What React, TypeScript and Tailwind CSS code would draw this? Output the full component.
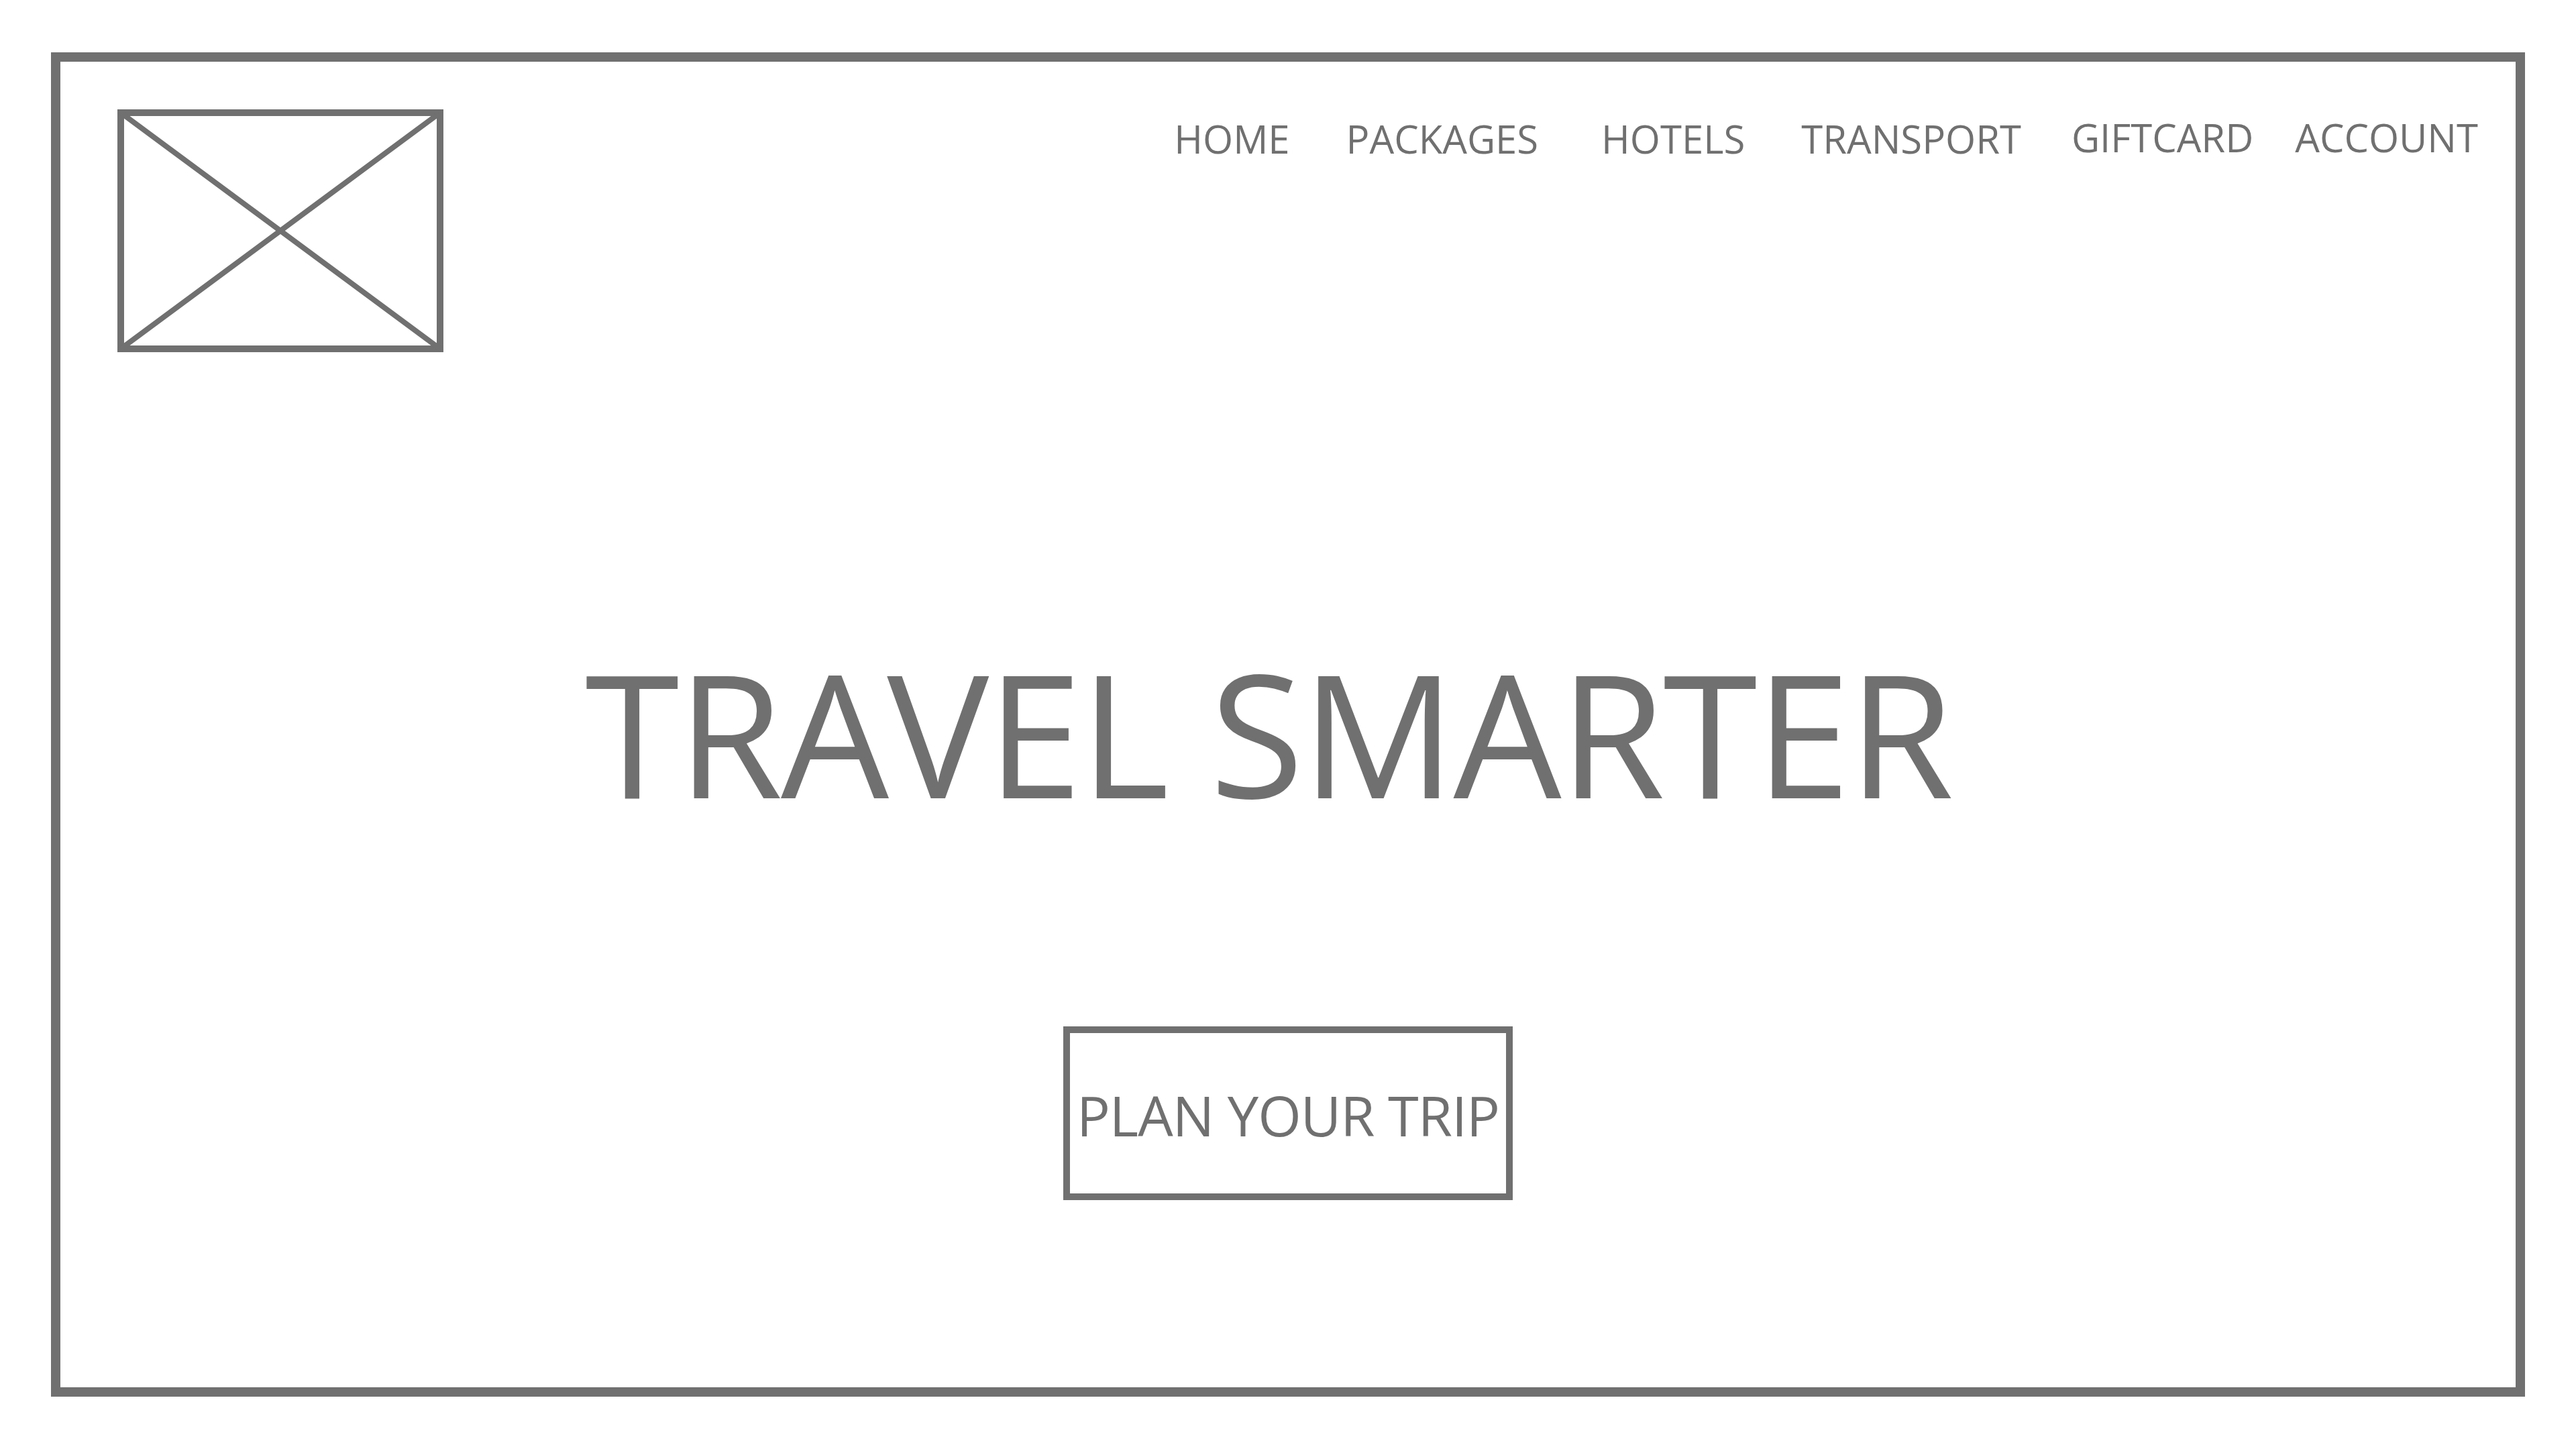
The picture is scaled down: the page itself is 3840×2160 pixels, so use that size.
import React from "react";

const navItems = [
  { label: "HOME", className: "" },
  { label: "PACKAGES", className: "ml-[84px]" },
  { label: "HOTELS", className: "ml-[94px]" },
  { label: "TRANSPORT", className: "ml-[84px]" },
  { label: "GIFTCARD", className: "ml-[75px] -mt-[2px]" },
  { label: "ACCOUNT", className: "ml-[62px] -mt-[2px]" },
];

const LogoPlaceholder = () => (
  <svg width="486" height="362" viewBox="0 0 486 362" className="block shrink-0">
    <rect x="5" y="5" width="476" height="352" fill="none" stroke="#707070" strokeWidth="10" />
    <line x1="5" y1="5" x2="481" y2="357" stroke="#707070" strokeWidth="8" strokeLinecap="square" />
    <line x1="481" y1="5" x2="5" y2="357" stroke="#707070" strokeWidth="8" strokeLinecap="square" />
  </svg>
);

export default function App() {
  return (
    <div className="min-h-screen w-full bg-white pl-[76px] pt-[78px] font-['Open_Sans',sans-serif] text-[#707070]">
      <div className="flex h-[2004px] w-[3688px] flex-col border-[14px] border-[#707070]">
        {/* header */}
        <div className="flex items-start justify-between pl-[85px] pr-[56px] pt-[71px]">
          <LogoPlaceholder />
          <nav className="mt-[15px] flex items-start">
            {navItems.map((item) => (
              <a key={item.label} href="#" className={`text-[58px] leading-none ${item.className}`}>
                {item.label}
              </a>
            ))}
          </nav>
        </div>

        {/* hero */}
        <div className="mt-[439px] flex justify-center pr-[58px]">
          <h1 className="text-[255px] font-normal leading-none tracking-[-3px]">TRAVEL SMARTER</h1>
        </div>

        <div className="mt-[311px] flex justify-center">
          <button className="flex h-[259px] w-[670px] items-center justify-center border-[10px] border-[#707070] pt-[3px] text-[83px] leading-none tracking-[-1px]">
            PLAN YOUR TRIP
          </button>
        </div>
      </div>
    </div>
  );
}
